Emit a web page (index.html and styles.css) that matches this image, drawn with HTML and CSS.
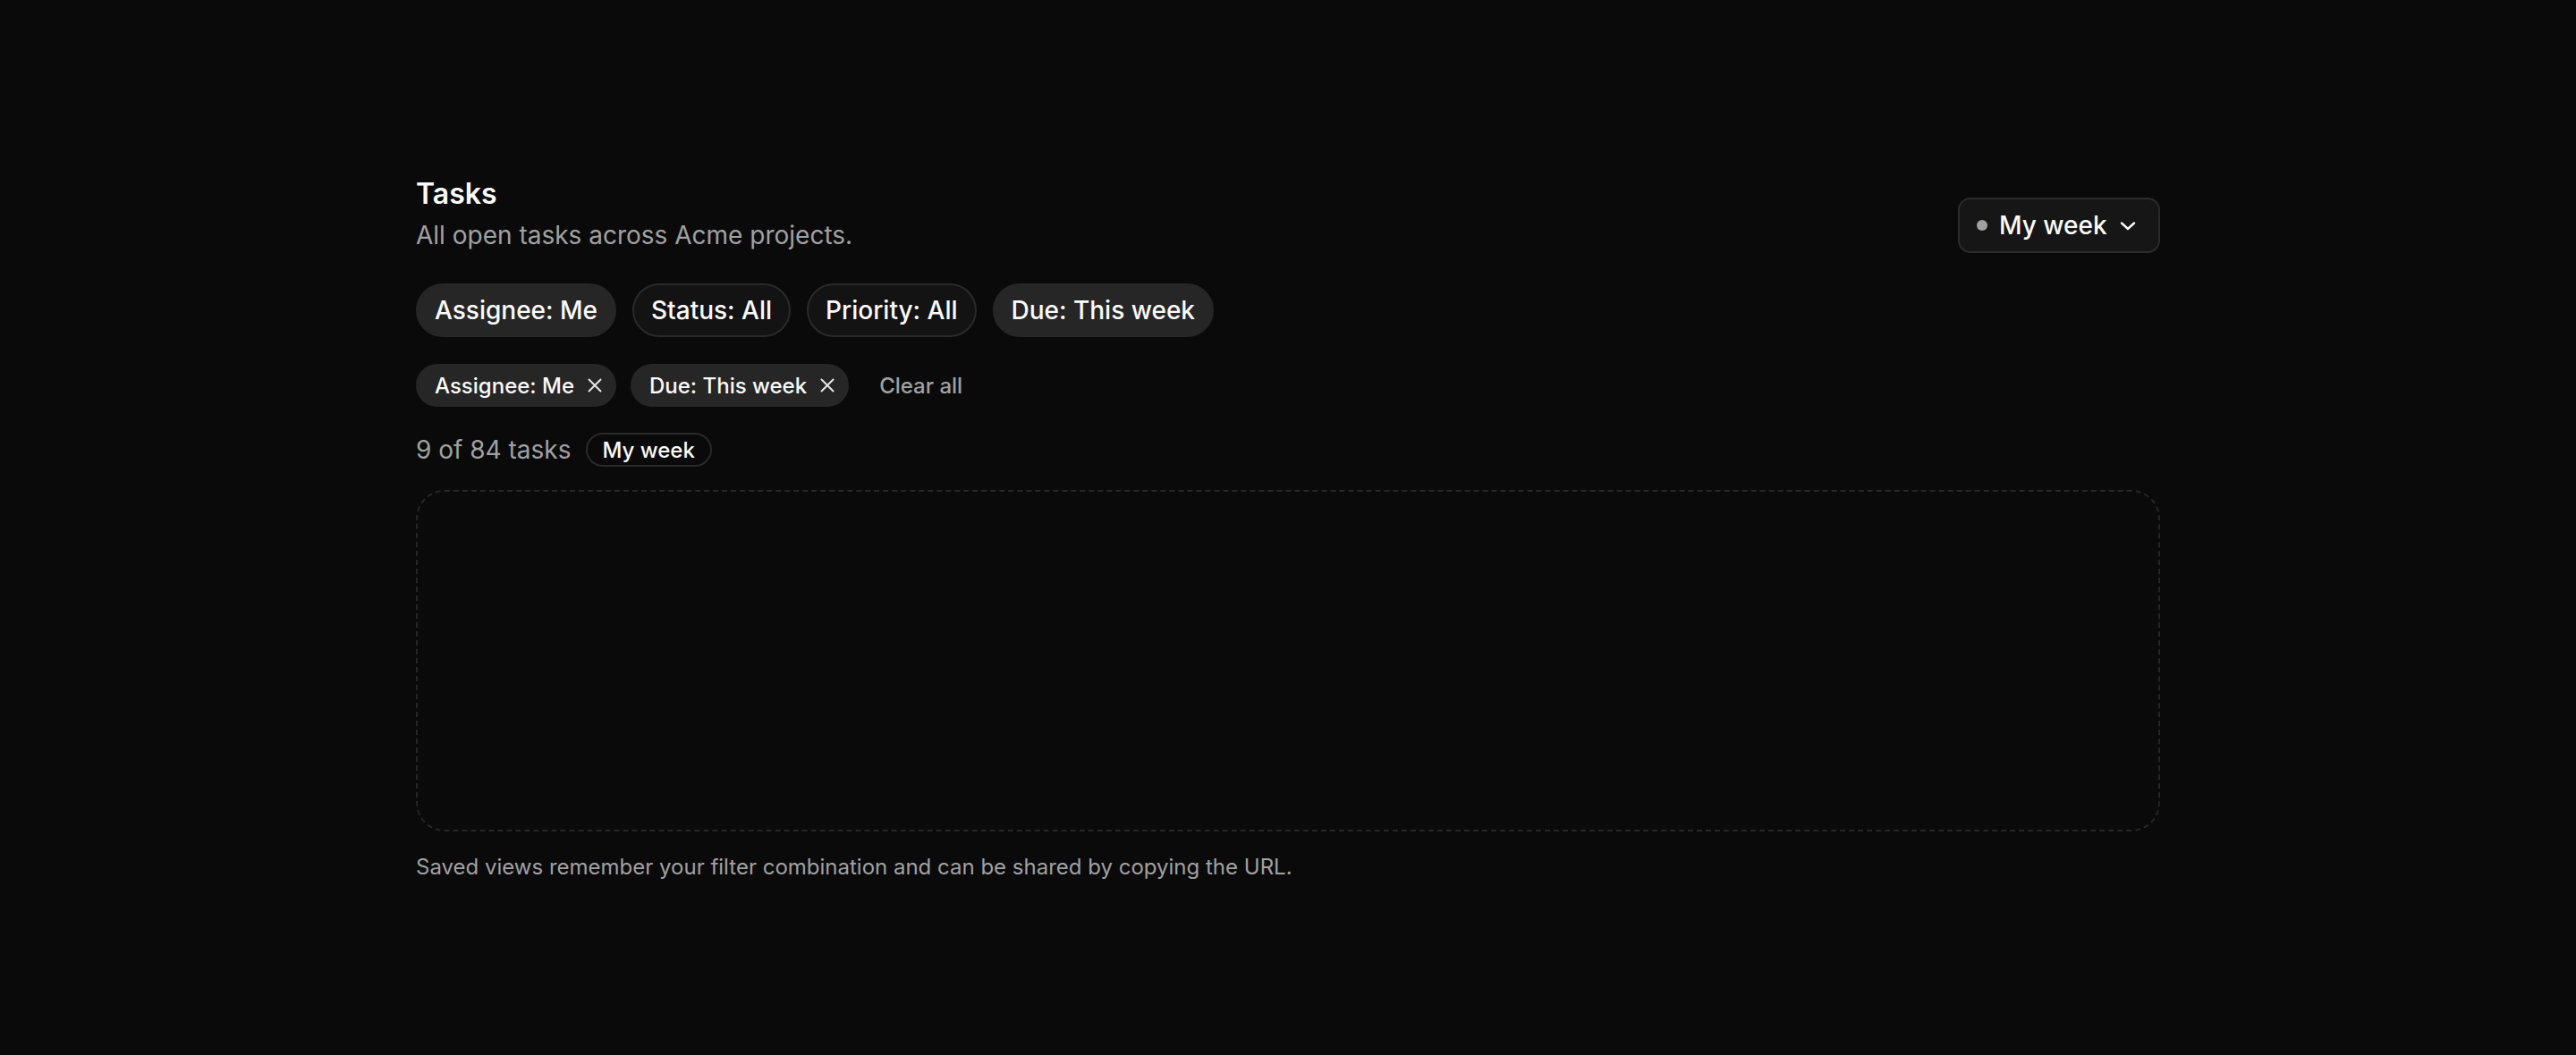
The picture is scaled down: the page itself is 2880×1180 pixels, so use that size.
FILE: index.html
```html
<!DOCTYPE html>
<html>

<head>
  <meta charset="utf-8">
  <title>Tasks</title>
  <link rel="stylesheet" href="styles.css">
</head>

<body>
  <main class="page">
    <div class="header">
      <div class="heading">
        <h1>Tasks</h1>
        <p class="subtitle">All open tasks across Acme projects.</p>
      </div>
      <button class="view-picker">
        <span class="dot"></span>
        <span>My week</span>
        <svg width="20" height="20" viewBox="0 0 20 20" fill="none" stroke="currentColor" stroke-width="2.4" stroke-linecap="round" stroke-linejoin="round"><path d="M3 7.5l7 6.5 7-6.5"/></svg>
      </button>
    </div>

    <div class="filters">
      <button class="filter active">Assignee: Me</button>
      <button class="filter">Status: All</button>
      <button class="filter">Priority: All</button>
      <button class="filter active">Due: This week</button>
    </div>

    <div class="applied">
      <span class="tag">Assignee: Me
        <svg width="16" height="16" viewBox="0 0 16 16" fill="none" stroke="currentColor" stroke-width="2" stroke-linecap="round"><path d="M1.5 1.5l13 13M14.5 1.5l-13 13"/></svg>
      </span>
      <span class="tag">Due: This week
        <svg width="16" height="16" viewBox="0 0 16 16" fill="none" stroke="currentColor" stroke-width="2" stroke-linecap="round"><path d="M1.5 1.5l13 13M14.5 1.5l-13 13"/></svg>
      </span>
      <button class="clear">Clear all</button>
    </div>

    <div class="count">
      <span>9 of 84 tasks</span>
      <span class="badge">My week</span>
    </div>

    <div class="results"></div>

    <p class="hint">Saved views remember your filter combination and can be shared by copying the URL.</p>
  </main>
</body>

</html>
```

FILE: styles.css
```css
body {
  margin: 0;
  background-color: #0a0a0a;
  color: #fafafa;
  font-family: Inter, "Noto Sans", sans-serif;
}

button {
  font-family: inherit;
  cursor: pointer;
}

.page {
  width: 1950px;
  margin: 0 auto;
  padding-top: 197px;
}

.header {
  display: flex;
  justify-content: space-between;
  align-items: flex-end;
}

h1 {
  margin: 0;
  font-size: 32px;
  line-height: 40px;
  font-weight: 600;
}

.subtitle {
  margin: 8px 0 0;
  font-size: 28px;
  line-height: 36px;
  color: #a1a1a1;
}

.view-picker {
  display: flex;
  align-items: center;
  height: 62px;
  width: 226px;
  padding: 0 24px 0 19px;
  margin-bottom: -2px;
  background-color: #161616;
  border: 2px solid #2b2b2b;
  border-radius: 14px;
  color: #fafafa;
  font-size: 28px;
  font-weight: 500;
}

.view-picker .dot {
  width: 12px;
  height: 12px;
  border-radius: 50%;
  background-color: #a1a1a1;
  margin-right: 13px;
}

.view-picker svg {
  margin-left: auto;
}

.filters {
  display: flex;
  gap: 18px;
  margin-top: 36px;
}

.filter {
  height: 60px;
  padding: 0 19px;
  border-radius: 999px;
  border: 2px solid #2a2a2a;
  background-color: #131313;
  color: #fafafa;
  font-size: 28px;
  font-weight: 500;
}

.filter.active {
  background-color: #262626;
  border-color: #262626;
}

.applied {
  display: flex;
  align-items: center;
  gap: 16px;
  margin-top: 30px;
}

.tag {
  display: flex;
  align-items: center;
  gap: 15px;
  height: 48px;
  box-sizing: border-box;
  padding: 0 16px 0 21px;
  border-radius: 999px;
  background-color: #262626;
  font-size: 24px;
  font-weight: 500;
}

.tag svg {
  color: #e5e5e5;
}

.clear {
  margin-left: 18px;
  padding: 0;
  border: none;
  background: none;
  color: #a1a1a1;
  font-size: 24px;
  font-weight: 500;
}

.count {
  display: flex;
  align-items: center;
  gap: 16px;
  margin-top: 29px;
  font-size: 28px;
  color: #a1a1a1;
}

.badge {
  height: 38px;
  box-sizing: border-box;
  display: flex;
  align-items: center;
  padding: 0 17px;
  border: 2px solid #2a2a2a;
  border-radius: 999px;
  color: #fafafa;
  font-size: 24px;
  font-weight: 500;
}

.results {
  height: 382px;
  box-sizing: border-box;
  margin-top: 26px;
  border: 2px dashed #262626;
  border-radius: 32px;
}

.hint {
  margin: 24px 0 0;
  font-size: 24px;
  line-height: 32px;
  color: #a1a1a1;
}
```
